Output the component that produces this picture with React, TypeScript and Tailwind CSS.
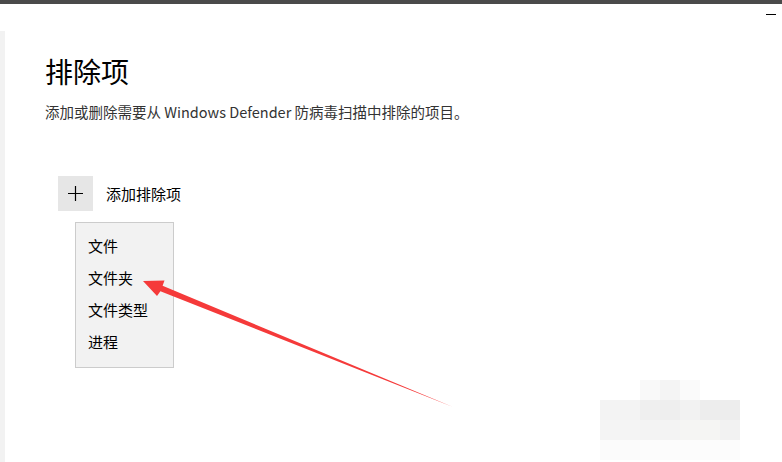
const MENU = ['文件', '文件夹', '文件类型', '进程'];

const MOSAIC = [
  { x: 640, y: 380, c: 'bg-[#f9f9f9]' },
  { x: 660, y: 380, c: 'bg-[#f4f4f4]' },
  { x: 680, y: 380, c: 'bg-[#fafafa]' },
  { x: 600, y: 400, c: 'bg-[#f3f3f3]' },
  { x: 620, y: 400, c: 'bg-[#f3f3f3]' },
  { x: 640, y: 400, c: 'bg-[#efefef]' },
  { x: 660, y: 400, c: 'bg-[#eeeeee]' },
  { x: 680, y: 400, c: 'bg-[#f2f2f2]' },
  { x: 700, y: 400, c: 'bg-[#ededed]' },
  { x: 720, y: 400, c: 'bg-[#ededed]' },
  { x: 600, y: 420, c: 'bg-[#f4f4f4]' },
  { x: 620, y: 420, c: 'bg-[#f4f4f4]' },
  { x: 640, y: 420, c: 'bg-[#f3f3f3]' },
  { x: 660, y: 420, c: 'bg-[#f3f3f3]' },
  { x: 680, y: 420, c: 'bg-[#f5f5f3]' },
  { x: 700, y: 420, c: 'bg-[#f5f5f3]' },
  { x: 720, y: 420, c: 'bg-[#f2f2f2]' },
  { x: 600, y: 440, c: 'bg-[#fbfbfb]' },
  { x: 620, y: 440, c: 'bg-[#fbfbfb]' },
  { x: 640, y: 440, c: 'bg-[#fcfcfc]' },
  { x: 660, y: 440, c: 'bg-[#fcfcfc]' },
  { x: 680, y: 440, c: 'bg-[#fcfcfc]' },
  { x: 700, y: 440, c: 'bg-[#fcfcfc]' },
  { x: 720, y: 440, c: 'bg-[#fcfcfc]' },
];

export default function App() {
  return (
    <div
      className="relative flex h-[462px] w-[782px] flex-col overflow-hidden bg-white text-black"
      style={{ fontFamily: '"Noto Sans CJK SC", "Noto Sans", sans-serif' }}
    >
      {/* window frame top */}
      <div className="h-[4px] w-full bg-[#4a4a4a]" />
      <div className="flex h-[27px] items-start justify-end pr-[6px]">
        <span className="mt-[10px] block h-[1px] w-[10px] bg-black" />
      </div>

      <div className="flex flex-1">
        <div className="w-[5px] bg-[#f2f2f2]" />
        <div className="flex flex-1 flex-col pl-[40px]">
          <h1 className="mt-[21px] text-[28px] leading-[38px] font-normal">排除项</h1>
          <p className="mt-[12px] text-[14.5px] leading-[20px] text-[#333]">
            添加或删除需要从 Windows Defender 防病毒扫描中排除的项目。
          </p>

          <div className="mt-[54px] ml-[13px] flex items-center">
            <div className="flex h-[35px] w-[35px] items-center justify-center bg-[#e6e6e6]">
              <svg width="15" height="15" viewBox="0 0 15 15">
                <path d="M7.5 0v15M0 7.5h15" stroke="#000" strokeWidth="1.2" />
              </svg>
            </div>
            <span className="ml-[13px] text-[15px] leading-[20px]">添加排除项</span>
          </div>

          <div className="mt-[11px] ml-[30px] flex h-[146px] w-[99px] flex-col border border-[#cccccc] bg-[#f2f2f2] pt-[13px] pl-[12px]">
            {MENU.map((m) => (
              <div key={m} className="h-[32px] text-[15px] leading-[20px]">
                {m}
              </div>
            ))}
          </div>
        </div>
      </div>

      {/* mosaic blur */}
      {MOSAIC.map((b, i) => (
        <div
          key={i}
          className={`absolute h-[20px] w-[20px] ${b.c}`}
          style={{ left: b.x, top: b.y }}
        />
      ))}

      {/* red arrow */}
      <svg className="pointer-events-none absolute top-0 left-0" width="782" height="462">
        <polygon
          points="143,281 164.5,280.5 162.6,285.7 453,407 160.4,291.3 157,296"
          fill="#f53a3a"
        />
      </svg>
    </div>
  );
}
